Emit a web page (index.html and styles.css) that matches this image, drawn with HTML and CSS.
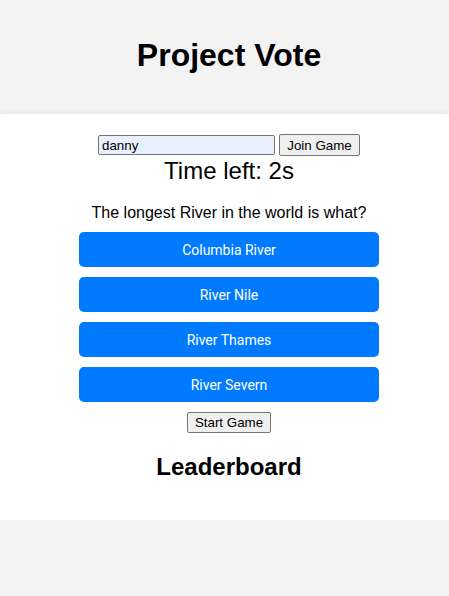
FILE: index.html
```html
<!DOCTYPE html>
<html lang="en">
<head>
<meta charset="utf-8">
<title>Project Vote</title>
<link rel="stylesheet" href="styles.css">
</head>
<body>
<header class="site-header">
  <h1 class="title">Project Vote</h1>
</header>
<main class="card">
  <div class="join-row">
    <input class="name-input" type="text" value="danny">
    <button class="plain-btn">Join Game</button>
  </div>
  <div class="timer">Time left: 2s</div>
  <p class="question">The longest River in the world is what?</p>
  <div class="answers">
    <button class="answer">Columbia River</button>
    <button class="answer">River Nile</button>
    <button class="answer">River Thames</button>
    <button class="answer">River Severn</button>
  </div>
  <button class="plain-btn start-btn">Start Game</button>
  <h2 class="board-title">Leaderboard</h2>
</main>
</body>
</html>
```
FILE: styles.css
```css
html, body {
  margin: 0;
  padding: 0;
}
body {
  background: #f3f3f3;
  font-family: "Liberation Sans", Arial, sans-serif;
  font-size: 16px;
  color: #000;
}
.site-header {
  padding: 16px 0 19px 9px;
  text-align: center;
}
.title {
  margin: 21px 0;
  font-size: 32px;
  font-weight: bold;
}
.card {
  background: #fff;
  box-shadow: 0 0 6px rgba(0, 0, 0, 0.1);
  padding: 20px 0 19px 9px;
  display: flex;
  flex-direction: column;
  align-items: center;
}
.join-row {
  display: flex;
  align-items: center;
  gap: 4px;
  height: 22px;
}
.name-input {
  width: 177px;
  height: 20px;
  box-sizing: border-box;
  border: 1px solid #767676;
  border-radius: 2px;
  background: #e8f0fe;
  font-family: "Liberation Sans", Arial, sans-serif;
  font-size: 13.33px;
  padding: 1px 3px;
  margin: 0;
}
.plain-btn {
  height: 22px;
  box-sizing: border-box;
  border: 1px solid #767676;
  border-radius: 2px;
  background: #efefef;
  font-family: "Liberation Sans", Arial, sans-serif;
  font-size: 13.33px;
  color: #000;
  padding: 1px 6px;
  margin: 0;
}
.join-row .plain-btn {
  width: 81px;
}
.timer {
  margin-top: 1px;
  font-size: 24px;
  line-height: 27px;
}
.question {
  margin: 20px 0 10px;
  line-height: 18px;
}
.answers {
  display: flex;
  flex-direction: column;
  gap: 10px;
  width: 300px;
}
.answer {
  height: 35px;
  border: none;
  border-radius: 5px;
  background: #007bff;
  color: #fff;
  font-family: Roboto, "Liberation Sans", sans-serif;
  font-size: 14px;
  font-weight: 400;
  padding: 0;
}
.start-btn {
  margin-top: 10px;
  width: 84px;
  height: 21px;
}
.board-title {
  margin: 20px 0;
  font-size: 24px;
  line-height: 28px;
  font-weight: bold;
}
```
